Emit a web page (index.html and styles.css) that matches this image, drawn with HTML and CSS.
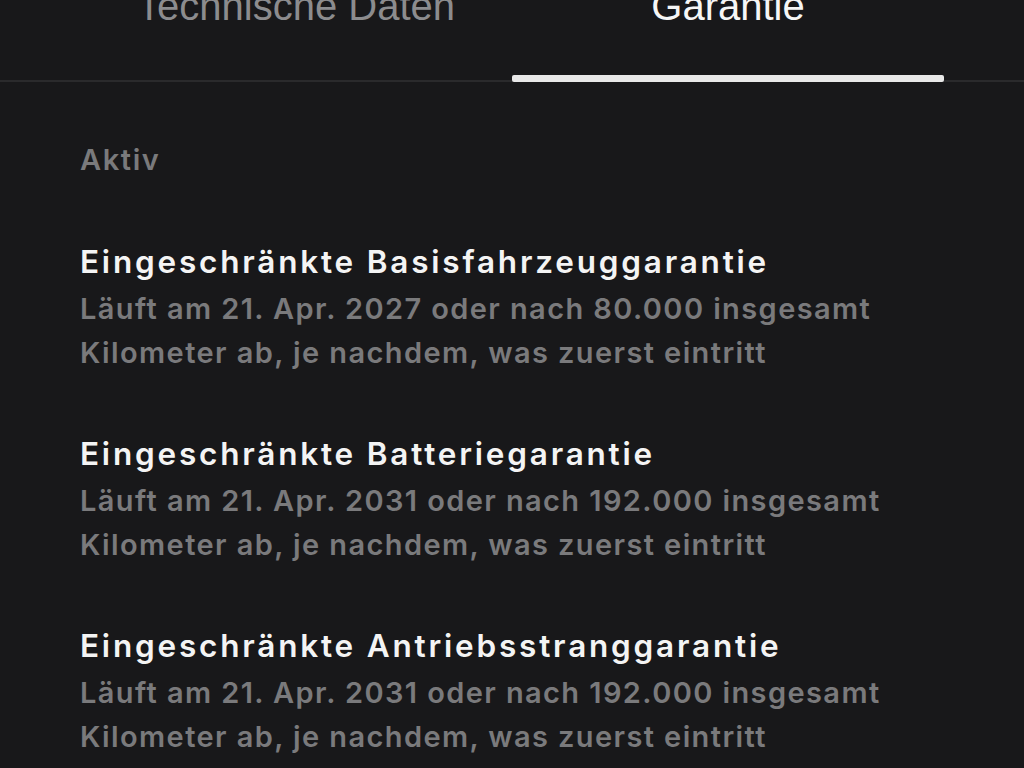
FILE: index.html
```html
<!DOCTYPE html>
<html lang="de">
<head>
<meta charset="utf-8">
<link rel="stylesheet" href="styles.css">
</head>
<body>
<header class="tabs">
  <div class="tab">Technische Daten</div>
  <div class="tab active">Garantie</div>
</header>
<main class="content">
  <div class="section-label">Aktiv</div>
  <div class="item">
    <div class="item-title">Eingeschränkte Basisfahrzeuggarantie</div>
    <div class="item-desc">Läuft am 21. Apr. 2027 oder nach 80.000 insgesamt<br>Kilometer ab, je nachdem, was zuerst eintritt</div>
  </div>
  <div class="item">
    <div class="item-title">Eingeschränkte Batteriegarantie</div>
    <div class="item-desc">Läuft am 21. Apr. 2031 oder nach 192.000 insgesamt<br>Kilometer ab, je nachdem, was zuerst eintritt</div>
  </div>
  <div class="item">
    <div class="item-title">Eingeschränkte Antriebsstranggarantie</div>
    <div class="item-desc">Läuft am 21. Apr. 2031 oder nach 192.000 insgesamt<br>Kilometer ab, je nachdem, was zuerst eintritt</div>
  </div>
</main>
</body>
</html>
```
FILE: styles.css
```css
html, body {
  margin: 0;
  padding: 0;
  background: #18181a;
  height: 768px;
  overflow: hidden;
}
body {
  font-family: "Inter", "Liberation Sans", sans-serif;
  font-weight: 600;
  color: #f2f2f2;
}
.tabs {
  display: flex;
  padding: 0 80px;
  height: 82px;
  border-bottom: 2px solid #2a2a2c;
  box-sizing: border-box;
}
.tab {
  flex: 1;
  text-align: center;
  font-family: "Liberation Sans", Arial, sans-serif;
  font-weight: 400;
  font-size: 40px;
  line-height: 40px;
  color: #8c8c8e;
  margin-top: -14px;
  position: relative;
}
.tab.active {
  color: #f6f6f6;
}
.tab.active::after {
  content: "";
  position: absolute;
  left: 0;
  right: 0;
  bottom: -2px;
  height: 7px;
  border-radius: 2px;
  background: #e8e8e8;
}
.content {
  padding: 0 80px;
}
.section-label {
  margin-top: 62px;
  font-size: 29px;
  letter-spacing: 1.6px;
  color: #7a7a7c;
  line-height: 32px;
}
.item {
  margin-top: 66px;
}
.item + .item {
  margin-top: 59px;
}
.item-title {
  font-size: 31.5px;
  letter-spacing: 2.8px;
  color: #f4f4f4;
  line-height: 40px;
  white-space: nowrap;
}
.item-desc {
  margin-top: 5px;
  font-size: 29px;
  letter-spacing: 1.4px;
  color: #7a7a7c;
  line-height: 44px;
  white-space: nowrap;
}
```
